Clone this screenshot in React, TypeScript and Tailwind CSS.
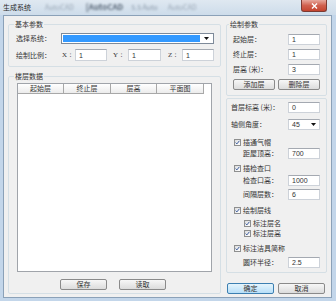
import React from "react";

function TextBox({ value, className = "" }: { value: string; className?: string }) {
  return (
    <div
      className={`h-[11px] bg-white border border-[#cdd2d9] border-t-[#a4a9b1] flex items-center pl-[3px] text-[7px] leading-none font-['Liberation_Sans',sans-serif] text-[#333] ${className}`}
    >
      {value}
    </div>
  );
}

function Button({ label, className = "", primary = false }: { label: string; className?: string; primary?: boolean }) {
  return (
    <div
      className={`h-[11px] rounded-[2px] border flex items-center justify-center text-[7px] leading-none ${
        primary
          ? "border-[#3c7fb1] bg-linear-to-b from-[#e5f4fc] to-[#b7dff8]"
          : "border-[#8a8a8a] bg-linear-to-b from-[#f7f7f7] to-[#dcdcdc]"
      } ${className}`}
    >
      {label}
    </div>
  );
}

function Check({ label, className = "" }: { label: string; className?: string }) {
  return (
    <div className={`h-[10px] flex items-center gap-[2px] ${className}`}>
      <div className="w-[7px] h-[7px] border border-[#8e8f8f] bg-linear-to-br from-[#dcdcdc] to-white flex items-center justify-center">
        <svg width="5" height="5" viewBox="0 0 5 5">
          <path d="M0.6 2.6 L1.9 3.9 L4.4 0.8" fill="none" stroke="#3d5fa0" strokeWidth="1" />
        </svg>
      </div>
      <span>{label}</span>
    </div>
  );
}

function Arrow() {
  return (
    <svg width="5" height="3" viewBox="0 0 5 3">
      <path d="M0 0 L5 0 L2.5 3 Z" fill="#111" />
    </svg>
  );
}

function FieldRow({ label, value, className = "", labelClass = "" }: { label: string; value: string; className?: string; labelClass?: string }) {
  return (
    <div className={`h-[11px] flex items-center justify-between ${className}`}>
      <span className={labelClass}>{label}</span>
      <TextBox value={value} className="w-[32px]" />
    </div>
  );
}

export default function App() {
  return (
    <div className="w-[336px] h-[301px] bg-[#c3d6ea] flex flex-col overflow-hidden font-['Noto_Sans_CJK_SC','Noto_Sans',sans-serif] text-[7px] leading-none text-[#333]">
      {/* Title bar */}
      <div className="h-[15px] flex items-start bg-linear-to-b from-[#dfe8f1] to-[#cddcea]">
        <span className="mt-[4px] ml-[3px] text-[#2a2a2a]">生成系统</span>
        <span className="mt-[4px] ml-[14px] text-[#9aa7b5] blur-[1.2px]">AutoCAD</span>
        <span className="mt-[3px] ml-[12px] text-[8px] font-bold text-[#5a6878] blur-[1.2px]">[AutoCAD</span>
        <span className="mt-[4px] ml-[8px] text-[#8a98a8] blur-[1.2px]">5.5 Auto</span>
        <span className="mt-[4px] ml-[10px] text-[#9aa7b5] blur-[1.2px]">AutoCAD</span>
        <div className="ml-auto mr-[9px] w-[26px] h-[12px] rounded-b-[3px] border border-t-0 border-[#7c3a32] bg-linear-to-b from-[#e6a89d] via-[#d0604e] to-[#c4442f] flex items-center justify-center">
          <svg width="7" height="6" viewBox="0 0 7 6">
            <path d="M1 0.5 L6 5.5 M6 0.5 L1 5.5" stroke="white" strokeWidth="1.4" />
          </svg>
        </div>
      </div>

      {/* Client area */}
      <div className="flex-1 ml-[3px] mr-[4px] mb-[3px] border border-[#8ba1b8] bg-[#f0f0f0] flex pl-[4px] pt-[4px] gap-[5px]">
        {/* Left column */}
        <div className="w-[213px] flex flex-col">
          <fieldset className="border border-[#d5dfe5] rounded-[2px] pl-[7px] pr-[6px] pt-[5px] pb-[5px] flex flex-col gap-[5px]">
            <legend className="ml-[-2px] px-[1px] h-[8px] leading-[8px]">基本参数</legend>
            <div className="h-[11px] flex items-center">
              <span className="w-[45px]">选择系统：</span>
              <div className="flex-1 h-[11px] border border-[#7e8a99] bg-white flex items-stretch p-[1px]">
                <div className="flex-1 bg-[#3399ff]" />
                <div className="w-[12px] flex items-center justify-center">
                  <Arrow />
                </div>
              </div>
            </div>
            <div className="h-[12px] flex items-center">
              <span className="w-[46px]">绘制比例：</span>
              <span className="w-[13px] font-['Liberation_Serif',serif]">X：</span>
              <TextBox value="1" className="w-[32px] h-[12px]" />
              <span className="w-[15px] ml-[6px] font-['Liberation_Serif',serif]">Y：</span>
              <TextBox value="1" className="w-[33px] h-[12px]" />
              <span className="w-[14px] ml-[7px] font-['Liberation_Serif',serif]">Z：</span>
              <TextBox value="1" className="w-[32px] h-[12px]" />
            </div>
          </fieldset>

          <fieldset className="mt-[5px] border border-[#d5dfe5] rounded-[2px] pl-[8px] pr-[8px] pt-[3px] pb-[3px] flex flex-col">
            <legend className="ml-[-3px] px-[1px] h-[8px] leading-[8px]">楼层数据</legend>
            <div className="h-[189px] border border-[#a0a4aa] bg-white flex flex-col">
              <div className="h-[10px] flex">
                <div className="w-[46px] border-r border-b border-[#a8a8a8] bg-linear-to-b from-white to-[#ececec] flex items-center justify-center">起始层</div>
                <div className="w-[47px] border-r border-b border-[#a8a8a8] bg-linear-to-b from-white to-[#ececec] flex items-center justify-center">终止层</div>
                <div className="w-[46px] border-r border-b border-[#a8a8a8] bg-linear-to-b from-white to-[#ececec] flex items-center justify-center">层高</div>
                <div className="w-[47px] border-r border-b border-[#a8a8a8] bg-linear-to-b from-white to-[#ececec] flex items-center justify-center">平面图</div>
              </div>
            </div>
            <div className="mt-[7px] flex">
              <Button label="保存" className="ml-[43px] w-[47px]" />
              <Button label="读取" className="ml-[12px] w-[47px]" />
            </div>
          </fieldset>
        </div>

        {/* Right column */}
        <div className="w-[101px] flex flex-col">
          <fieldset className="border border-[#d5dfe5] rounded-[2px] pl-[6px] pr-[6px] pt-[6px] pb-[5px] flex flex-col gap-[4px]">
            <legend className="ml-[-4px] px-[1px] h-[8px] leading-[8px]">绘制参数</legend>
            <FieldRow label="起始层：" value="1" />
            <FieldRow label="终止层：" value="1" />
            <FieldRow label="层高 (米)：" value="3" />
            <div className="flex gap-[3px]">
              <Button label="添加层" className="w-[42px]" />
              <Button label="删除层" className="w-[42px]" />
            </div>
          </fieldset>

          <div className="mt-[2px] border border-[#d5dfe5] rounded-[2px] pl-[4px] pr-[6px] pb-[4px] flex flex-col">
            <FieldRow label="首层标高 (米)：" value="0" className="mt-[3px]" />
            <div className="mt-[6px] h-[11px] flex items-center justify-between">
              <span>轴侧角度：</span>
              <div className="w-[32px] h-[11px] bg-white border border-[#cdd2d9] border-t-[#a4a9b1] flex items-center justify-between pl-[3px] pr-[3px] font-['Liberation_Sans',sans-serif]">
                <span>45</span>
                <Arrow />
              </div>
            </div>
            <Check label="插通气帽" className="mt-[7px] ml-[3px]" />
            <FieldRow label="距屋顶高：" value="700" className="mt-[1px]" labelClass="ml-[12px]" />
            <Check label="插检查口" className="mt-[4px] ml-[3px]" />
            <FieldRow label="检查口高：" value="1000" className="mt-[2px]" labelClass="ml-[12px]" />
            <FieldRow label="间隔层数：" value="6" className="mt-[3px]" labelClass="ml-[12px]" />
            <Check label="绘制层线" className="mt-[5px] ml-[3px]" />
            <Check label="标注层名" className="mt-[3px] ml-[13px]" />
            <Check label="标注层高" className="ml-[13px]" />
            <Check label="标注洁具简称" className="mt-[5px] ml-[3px]" />
            <FieldRow label="圆环半径：" value="2.5" className="mt-[4px]" labelClass="ml-[12px]" />
          </div>

          <div className="mt-[10px] flex">
            <Button label="确定" primary className="ml-[1px] w-[47px]" />
            <Button label="取消" className="ml-[4px] w-[47px]" />
          </div>
        </div>
      </div>
    </div>
  );
}
